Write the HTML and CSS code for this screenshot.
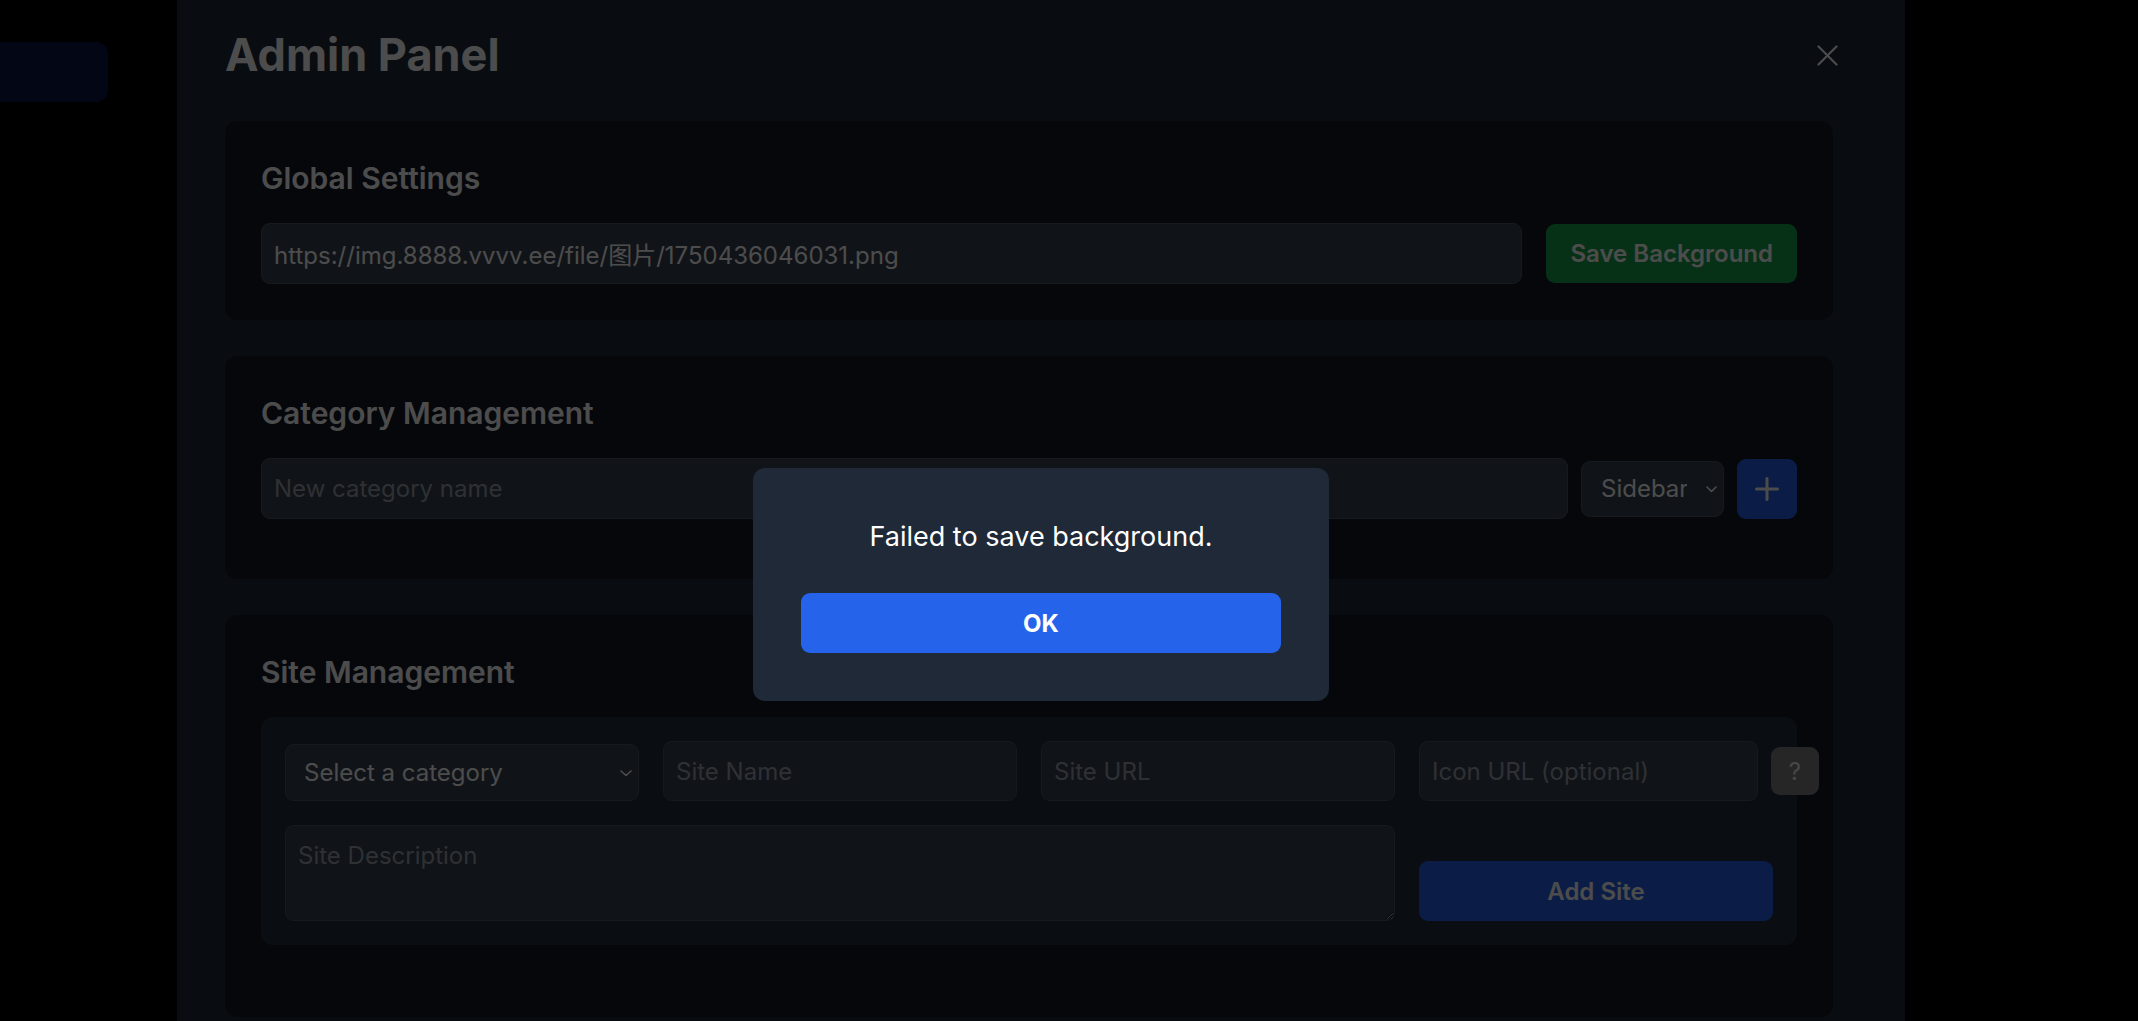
FILE: index.html
```html
<!DOCTYPE html>
<html lang="en">
<head>
    <meta charset="UTF-8">
    <meta name="viewport" content="width=device-width, initial-scale=1.0">
    <title>Admin Panel</title>
    <link rel="stylesheet" href="styles.css">
</head>
<body>
    <div class="main-page">
        <div class="nav-pill"></div>
    </div>

    <div class="admin-overlay">
        <div class="admin-panel">
            <div class="panel-header">
                <h1 class="panel-title">Admin Panel</h1>
                <button class="close-btn" aria-label="Close">
                    <svg width="21" height="21" viewBox="0 0 21 21" fill="none" stroke="currentColor" stroke-width="2.2" stroke-linecap="round">
                        <line x1="1.5" y1="1.5" x2="19.5" y2="19.5"/>
                        <line x1="19.5" y1="1.5" x2="1.5" y2="19.5"/>
                    </svg>
                </button>
            </div>

            <div class="sections">
                <!-- Global settings -->
                <div class="card">
                    <h2>Global Settings</h2>
                    <div class="row">
                        <input type="text" class="field grow" value="https://img.8888.vvvv.ee/file/图片/1750436046031.png">
                        <button class="btn btn-green">Save Background</button>
                    </div>
                </div>

                <!-- Categories -->
                <div class="card">
                    <h2>Category Management</h2>
                    <div class="row row-tight">
                        <input type="text" class="field grow" placeholder="New category name">
                        <div class="select-wrap">
                            <select class="field select select-small">
                                <option>Sidebar</option>
                                <option>Top</option>
                            </select>
                            <svg class="chevron" width="11" height="7" viewBox="0 0 11 7" fill="none" stroke="currentColor" stroke-width="1.6" stroke-linecap="round" stroke-linejoin="round"><polyline points="1,1 5.5,5.5 10,1"/></svg>
                        </div>
                        <button class="btn btn-blue btn-square" aria-label="Add category">
                            <svg width="24" height="24" viewBox="0 0 24 24" fill="none" stroke="currentColor" stroke-width="3" stroke-linecap="round">
                                <line x1="12" y1="1.5" x2="12" y2="22.5"/>
                                <line x1="1.5" y1="12" x2="22.5" y2="12"/>
                            </svg>
                        </button>
                    </div>
                    <div class="category-list"></div>
                </div>

                <!-- Sites -->
                <div class="card">
                    <h2>Site Management</h2>
                    <div class="site-form">
                        <div class="select-wrap select-cat">
                            <select class="field select">
                                <option>Select a category</option>
                            </select>
                            <svg class="chevron" width="12" height="7" viewBox="0 0 12 7" fill="none" stroke="currentColor" stroke-width="1.6" stroke-linecap="round" stroke-linejoin="round"><polyline points="1,1 6,5.5 11,1"/></svg>
                        </div>
                        <input type="text" class="field" placeholder="Site Name">
                        <input type="text" class="field" placeholder="Site URL">
                        <div class="icon-field">
                            <input type="text" class="field" placeholder="Icon URL (optional)">
                            <button class="help-btn">?</button>
                        </div>
                        <textarea class="field description" placeholder="Site Description"></textarea>
                        <button class="btn btn-blue add-site">Add Site</button>
                    </div>
                    <div class="site-list"></div>
                </div>
            </div>
        </div>
    </div>

    <div class="alert-overlay">
        <div class="alert-box">
            <p>Failed to save background.</p>
            <button class="alert-ok">OK</button>
        </div>
    </div>
</body>
</html>
```

FILE: styles.css
```css
* {
    margin: 0;
    padding: 0;
    box-sizing: border-box;
}

body {
    font-family: Inter, "Noto Sans CJK SC", sans-serif;
    background-color: #000;
    color: #fff;
    height: 100vh;
    overflow: hidden;
}

.main-page {
    padding-top: 42px;
}

.nav-pill {
    width: 120px;
    height: 60px;
    margin-left: -12px;
    background-color: #1e40af;
    border-radius: 12px;
}

/* admin modal */
.admin-overlay {
    position: fixed;
    inset: 0;
    background-color: rgba(0, 0, 0, 0.6);
    display: flex;
    justify-content: center;
    padding-right: 56px;
}

.admin-panel {
    width: 1728px;
    height: 100%;
    background-color: #1f2937;
    padding: 28px 48px 0;
    overflow: hidden;
}

.panel-header {
    display: flex;
    justify-content: space-between;
    align-items: center;
    margin-bottom: 39px;
}

.panel-title {
    font-size: 45px;
    line-height: 54px;
    font-weight: 700;
}

.close-btn {
    width: 60px;
    height: 54px;
    background: none;
    border: none;
    color: #fff;
    display: flex;
    align-items: center;
    justify-content: center;
}

.sections {
    display: flex;
    flex-direction: column;
    gap: 36px;
    margin-right: 24px;
}

.card {
    background-color: #111827;
    border-radius: 12px;
    padding: 36px;
}

.card h2 {
    font-size: 30px;
    line-height: 42px;
    font-weight: 600;
    margin-bottom: 24px;
}

.row {
    display: flex;
    gap: 24px;
    align-items: center;
}

.row-tight {
    gap: 13px;
}

.grow {
    flex: 1;
}

.field {
    font-family: inherit;
    font-size: 24px;
    line-height: 35px;
    color: #fff;
    background-color: #374151;
    border: 1px solid #4b5563;
    border-radius: 9px;
    padding: 12px;
    height: 61px;
    outline: none;
    min-width: 0;
}

.field::placeholder {
    color: #9ca3af;
}

.btn {
    font-family: inherit;
    font-size: 24px;
    font-weight: 600;
    color: #fff;
    border: none;
    border-radius: 9px;
    display: flex;
    align-items: center;
    justify-content: center;
}

.btn-green {
    background-color: #16a34a;
    height: 59px;
    padding: 0 24px;
}

.btn-blue {
    background-color: #2563eb;
}

.btn-square {
    width: 60px;
    height: 60px;
}

.select-wrap {
    position: relative;
    display: flex;
}

.select {
    appearance: none;
    -webkit-appearance: none;
    width: 100%;
    padding: 0 36px 0 18px;
    height: 57px;
}

.select-small {
    width: 143px;
    height: 56px;
    padding-left: 19px;
}

.chevron {
    position: absolute;
    right: 7px;
    top: 50%;
    margin-top: -3px;
    color: #fff;
    pointer-events: none;
}

.category-list {
    margin-top: 24px;
}

.site-form {
    background-color: rgba(55, 65, 81, 0.5);
    border-radius: 12px;
    padding: 24px;
    display: grid;
    grid-template-columns: repeat(4, minmax(0, 1fr));
    gap: 24px;
}

.site-form .field {
    height: 60px;
}

.site-form .select-cat {
    align-self: end;
}

.site-form .select-cat .select {
    height: 57px;
}

.icon-field {
    display: flex;
    align-items: center;
    gap: 13px;
}

.icon-field .field {
    width: 339px;
    flex: none;
}

.help-btn {
    flex: none;
    width: 48px;
    height: 48px;
    border: none;
    border-radius: 9px;
    background-color: #808080;
    color: #ededed;
    font-family: inherit;
    font-size: 24px;
}

.site-form .description {
    grid-column: span 3;
    height: 96px;
    resize: vertical;
}

.add-site {
    align-self: end;
    height: 60px;
}

.site-list {
    margin-top: 36px;
}

/* alert dialog */
.alert-overlay {
    position: fixed;
    inset: 0;
    background-color: rgba(0, 0, 0, 0.7);
}

.alert-box {
    position: absolute;
    left: 753px;
    top: 468px;
    width: 576px;
    background-color: #1f2937;
    border-radius: 12px;
    padding: 48px;
    text-align: center;
}

.alert-box p {
    font-size: 27px;
    line-height: 42px;
    margin-bottom: 35px;
}

.alert-ok {
    width: 100%;
    height: 60px;
    background-color: #2563eb;
    color: #fff;
    font-family: inherit;
    font-size: 24px;
    font-weight: 700;
    border: none;
    border-radius: 9px;
}
```
